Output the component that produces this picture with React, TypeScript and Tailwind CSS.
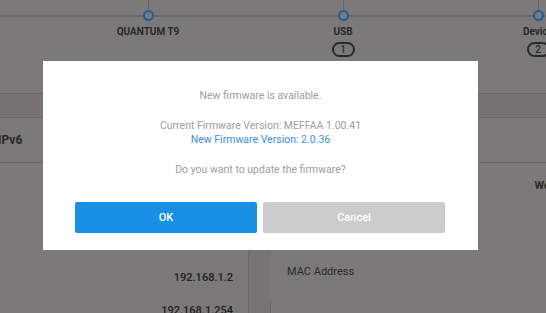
import React from "react";

const nodes = [
  { x: 148, label: "QUANTUM T9", badge: "" },
  { x: 343, label: "USB", badge: "1" },
  { x: 538, label: "Device", badge: "2" },
];

function TopoNode({ x, label, badge }: { x: number; label: string; badge: string }) {
  return (
    <div className="absolute top-0 flex w-[80px] -translate-x-1/2 flex-col items-center" style={{ left: x }}>
      <div className="h-[10px] w-px bg-[#686666]" />
      <div className="h-[11px] w-[11px] rounded-full border-2 border-[#215f93] bg-[#7b7979]" />
      <div className="mt-[5px] text-[10px] font-bold leading-[12px] text-[#2a2929]">{label}</div>
      {badge && (
        <div className="mt-[4px] flex h-[15px] w-[23px] items-center justify-center rounded-full border-2 border-[#2a2929] text-[10px] font-medium leading-none text-[#2a2929]">
          {badge}
        </div>
      )}
    </div>
  );
}

export default function App() {
  return (
    <div
      className="relative h-[313px] w-[546px] overflow-hidden bg-[#7b7979]"
      style={{ fontFamily: "Roboto, 'Liberation Sans', sans-serif" }}
    >
      {/* topology */}
      <div className="relative h-[93px]">
        <div className="absolute left-0 right-0 top-[15px] h-[2px] bg-[#686666]" />
        {nodes.map((n) => (
          <TopoNode key={n.label} {...n} />
        ))}
      </div>

      <div className="h-[25px] border-y border-[#696767] bg-[#757373]" />
      <div className="flex h-[45px] items-center border-b border-[#696767]">
        <span className="-ml-[2px] text-[12px] font-bold text-[#2a2929]">IPv6</span>
      </div>

      <div className="flex h-[150px]">
        <div className="flex w-[249px] flex-col items-end border-r border-[#696767] pr-[15px] pt-[108px]">
          <div className="text-[11px] font-medium leading-[14px] text-[#222121]">192.168.1.2</div>
          <div className="mt-[19px] text-[11px] font-medium leading-[14px] text-[#222121]">192.168.1.254</div>
        </div>
        <div className="flex w-[22px] flex-col bg-[#777575]">
          <div className="h-[139px]" />
          <div className="ml-auto w-px flex-1 bg-[#696767]" />
        </div>
        <div className="relative flex-1 pl-[16px] pt-[102px]">
          <div className="absolute right-[-4px] top-[15px] text-[11px] font-bold text-[#2a2929]">We</div>
          <div className="text-[11px] leading-[14px] text-[#2a2929]">MAC Address</div>
        </div>
      </div>

      {/* modal */}
      <div className="absolute left-[43px] top-[61px] flex h-[189px] w-[435px] flex-col items-center bg-white pt-[28px] text-[10.5px] leading-[14px]">
        <p className="text-[#9d9d9d]">New firmware is available.</p>
        <div className="mt-[16px] flex flex-col items-center">
          <p className="text-[#9d9d9d]">Current Firmware Version: MEFFAA 1.00.41</p>
          <p className="text-[#3b8fe3]">New Firmware Version: 2.0.36</p>
        </div>
        <p className="mt-[16px] text-[#9d9d9d]">Do you want to update the firmware?</p>
        <div className="mt-[25px] flex w-full gap-[6px] pl-[32px] pr-[33px]">
          <button className="h-[31px] flex-1 rounded-[2px] bg-[#1890e6] text-[11px] font-medium text-white">OK</button>
          <button className="h-[31px] flex-1 rounded-[2px] bg-[#cccccc] text-[11px] font-medium text-white">Cancel</button>
        </div>
      </div>
    </div>
  );
}
